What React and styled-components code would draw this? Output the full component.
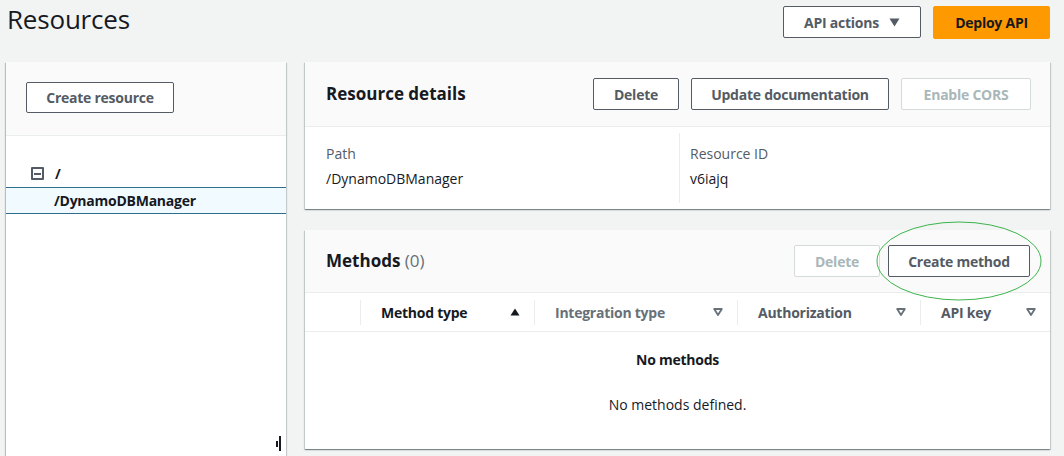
import React from "react";
import styled, { createGlobalStyle } from "styled-components";

const Global = createGlobalStyle`
  html, body { margin: 0; padding: 0; background: #f2f3f3; overflow: hidden; }
  body { font-family: "Open Sans", "Noto Sans", sans-serif; color: #16191f; font-size: 14px; }
  * { box-sizing: border-box; }
`;

const Page = styled.div`
  padding: 0 14px 0 6px;
  width: 1064px;
  height: 456px;
  overflow: hidden;
`;

const TopBar = styled.div`
  height: 62px;
  display: flex;
  align-items: flex-start;
  justify-content: space-between;
`;

const Title = styled.h1`
  margin: 2px 0 0 1px;
  font-size: 26px;
  font-weight: 400;
  line-height: 34px;
  letter-spacing: -0.2px;
`;

const Actions = styled.div`
  display: flex;
  gap: 12px;
  padding-top: 6px;
`;

const Button = styled.button`
  font-family: inherit;
  font-size: 14px;
  font-weight: 700;
  letter-spacing: -0.25px;
  height: ${(p) => p.$h || 32}px;
  width: ${(p) => p.$w}px;
  padding: 0;
  display: inline-flex;
  align-items: center;
  justify-content: center;
  gap: 10px;
  border-radius: 2px;
  cursor: pointer;
  background: ${(p) => (p.$primary ? "#ff9900" : "#ffffff")};
  color: ${(p) => (p.$primary ? "#16191f" : p.$disabled ? "#aab7b8" : "#545b64")};
  border: 1px solid ${(p) => (p.$primary ? "#ff9900" : p.$disabled ? "#d5dbdb" : "#545b64")};
`;

const Main = styled.div`
  display: grid;
  grid-template-columns: 280px 745px;
  column-gap: 19px;
  align-items: start;
`;

const SidePanel = styled.div`
  position: relative;
  height: 400px;
  background: #fff;
  box-shadow: 0 1px 1px 0 rgba(0, 28, 36, 0.3), 1px 1px 1px 0 rgba(0, 28, 36, 0.15),
    -1px 1px 1px 0 rgba(0, 28, 36, 0.2);
`;

const SideHeader = styled.div`
  height: 74px;
  background: #fafafa;
  border-bottom: 1px solid #eaeded;
  padding: 20px 0 0 20px;
`;

const Tree = styled.div`
  padding-top: 24px;
`;

const TreeRow = styled.div`
  height: 27px;
  display: flex;
  align-items: center;
  padding-left: ${(p) => p.$indent}px;
  font-weight: 700;
  letter-spacing: -0.25px;
  font-size: 14px;
  gap: 11px;
  background: ${(p) => (p.$selected ? "#f1faff" : "transparent")};
  border-top: 1px solid ${(p) => (p.$selected ? "#2e6f8e" : "transparent")};
  border-bottom: 1px solid ${(p) => (p.$selected ? "#2e6f8e" : "transparent")};
`;

const Collapse = styled.span`
  width: 13px;
  height: 13px;
  border: 2px solid #545b64;
  border-radius: 1px;
  display: inline-flex;
  align-items: center;
  justify-content: center;
  &::after {
    content: "";
    width: 7px;
    height: 2px;
    background: #545b64;
  }
`;

const Grip = styled.svg`
  position: absolute;
  right: 4px;
  bottom: 10px;
`;

const Column = styled.div`
  display: flex;
  flex-direction: column;
  gap: 21px;
`;

const Card = styled.div`
  background: #fff;
  box-shadow: 0 1px 1px 0 rgba(0, 28, 36, 0.3), 1px 1px 1px 0 rgba(0, 28, 36, 0.15),
    -1px 1px 1px 0 rgba(0, 28, 36, 0.15);
`;

const CardHeader = styled.div`
  height: ${(p) => p.$h}px;
  background: #fafafa;
  border-bottom: 1px solid #eaeded;
  display: flex;
  align-items: center;
  padding: 0 ${(p) => p.$pr}px 0 21px;
`;

const CardTitle = styled.h2`
  margin: 0;
  flex: 1;
  font-size: 17px;
  font-weight: 700;
  line-height: 24px;
  span { font-weight: 400; color: #687078; }
`;

const ButtonRow = styled.div`
  display: flex;
  gap: ${(p) => p.$gap}px;
`;

const Details = styled.div`
  height: 82px;
  display: grid;
  grid-template-columns: 374px 1fr;
  padding: 6px 0;
`;

const Field = styled.div`
  padding: 8px 0 0 ${(p) => p.$pl}px;
  border-left: ${(p) => (p.$sep ? "1px solid #eaeded" : "none")};
  line-height: 25px;
`;

const Label = styled.div`
  color: #545b64;
  font-size: 14px;
`;

const Value = styled.div`
  font-size: 14px;
`;

const CreateWrap = styled.span`
  position: relative;
  display: inline-flex;
`;

const Ring = styled.svg`
  position: absolute;
  left: -12px;
  top: -24px;
  pointer-events: none;
`;

const TableHead = styled.div`
  height: 39px;
  display: grid;
  grid-template-columns: 55px 174px 203px 183px 130px;
  border-bottom: 1px solid #eaeded;
  align-items: center;
`;

const Th = styled.div`
  height: 25px;
  display: flex;
  align-items: center;
  justify-content: space-between;
  padding: 0 ${(p) => p.$pr}px 0 20px;
  border-left: ${(p) => (p.$first ? "none" : "1px solid #eaeded")};
  font-weight: 700;
  letter-spacing: -0.25px;
  font-size: 14px;
  color: ${(p) => p.$color || "#545b64"};
`;

const Empty = styled.div`
  height: 117px;
  display: flex;
  flex-direction: column;
  align-items: center;
  padding-top: 18px;
  gap: 25px;
`;

const EmptyTitle = styled.div`
  font-weight: 700;
  letter-spacing: -0.25px;
  font-size: 14px;
  line-height: 20px;
`;

const EmptyText = styled.div`
  font-size: 14px;
  line-height: 20px;
`;

const SortUp = () => (
  <svg width="10" height="8" viewBox="0 0 10 8">
    <path d="M5 0.5 L9.5 7.5 L0.5 7.5 Z" fill="#16191f" />
  </svg>
);

const SortNone = () => (
  <svg width="10" height="8" viewBox="0 0 10 8">
    <path d="M1.2 1 L8.8 1 L5 7 Z" fill="none" stroke="#687078" strokeWidth="1.8" strokeLinejoin="round" />
  </svg>
);

const Caret = () => (
  <svg width="11" height="9" viewBox="0 0 11 9">
    <path d="M0.5 0.5 L10.5 0.5 L5.5 8.5 Z" fill="#545b64" />
  </svg>
);

export default function App() {
  return (
    <>
      <Global />
      <Page>
        <TopBar>
          <Title>Resources</Title>
          <Actions>
            <Button $w={138} $h={32}>
              API actions <Caret />
            </Button>
            <Button $primary $w={117} $h={33}>
              Deploy API
            </Button>
          </Actions>
        </TopBar>
        <Main>
          <SidePanel>
            <SideHeader>
              <Button $w={148} $h={31}>Create resource</Button>
            </SideHeader>
            <Tree>
              <TreeRow $indent={25}>
                <Collapse />
                <span>/</span>
              </TreeRow>
              <TreeRow $indent={48} $selected>
                /DynamoDBManager
              </TreeRow>
            </Tree>
            <Grip width="6" height="16" viewBox="0 0 6 16">
              <rect x="0" y="5" width="2" height="6" fill="#16191f" />
              <rect x="3" y="0" width="2" height="15" fill="#16191f" />
            </Grip>
          </SidePanel>
          <Column>
            <Card>
              <CardHeader $h={65} $pr={19}>
                <CardTitle>Resource details</CardTitle>
                <ButtonRow $gap={12}>
                  <Button $w={86}>Delete</Button>
                  <Button $w={198}>Update documentation</Button>
                  <Button $w={130} $disabled>Enable CORS</Button>
                </ButtonRow>
              </CardHeader>
              <Details>
                <Field $pl={21}>
                  <Label>Path</Label>
                  <Value>/DynamoDBManager</Value>
                </Field>
                <Field $pl={10} $sep>
                  <Label>Resource ID</Label>
                  <Value>v6iajq</Value>
                </Field>
              </Details>
            </Card>
            <Card>
              <CardHeader $h={63} $pr={20}>
                <CardTitle>
                  Methods <span>(0)</span>
                </CardTitle>
                <ButtonRow $gap={8}>
                  <Button $w={86} $disabled>Delete</Button>
                  <CreateWrap>
                    <Button $w={142}>Create method</Button>
                    <Ring width="166" height="80" viewBox="0 0 166 80">
                      <ellipse cx="83" cy="40" rx="82" ry="39" fill="none" stroke="#3cb44b" strokeWidth="1" />
                    </Ring>
                  </CreateWrap>
                </ButtonRow>
              </CardHeader>
              <TableHead>
                <Th $first />
                <Th $pr={14} $color="#16191f">
                  Method type <SortUp />
                </Th>
                <Th $pr={14} $color="#687078">
                  Integration type <SortNone />
                </Th>
                <Th $pr={14}>
                  Authorization <SortNone />
                </Th>
                <Th $pr={14}>
                  API key <SortNone />
                </Th>
              </TableHead>
              <Empty>
                <EmptyTitle>No methods</EmptyTitle>
                <EmptyText>No methods defined.</EmptyText>
              </Empty>
            </Card>
          </Column>
        </Main>
      </Page>
    </>
  );
}
